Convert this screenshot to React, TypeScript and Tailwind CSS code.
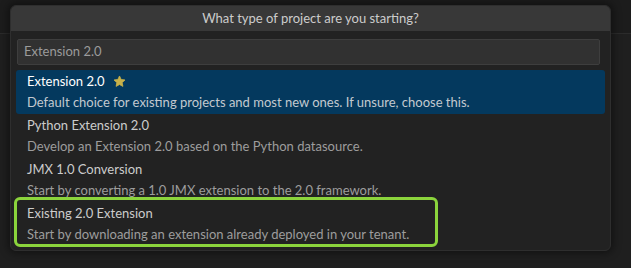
import React from "react";

const items = [
  {
    title: "Extension 2.0",
    description:
      "Default choice for existing projects and most new ones. If unsure, choose this.",
    recommended: true,
  },
  {
    title: "Python Extension 2.0",
    description: "Develop an Extension 2.0 based on the Python datasource.",
  },
  {
    title: "JMX 1.0 Conversion",
    description: "Start by converting a 1.0 JMX extension to the 2.0 framework.",
  },
  {
    title: "Existing 2.0 Extension",
    description: "Start by downloading an extension already deployed in your tenant.",
  },
];

function Star() {
  return (
    <svg width="13" height="13" viewBox="0 0 16 16" className="ml-[8px] shrink-0">
      <path
        d="M8 1.2l2.05 4.3 4.7.6-3.45 3.25.9 4.65L8 11.75 3.8 14l.9-4.65L1.25 6.1l4.7-.6z"
        fill="#c7b14a"
        stroke="#c7b14a"
        strokeWidth="1"
        strokeLinejoin="round"
      />
    </svg>
  );
}

export default function App() {
  return (
    <div
      className="relative w-[631px] h-[268px] overflow-hidden bg-[#1f1f1f]"
      style={{ fontFamily: "Lato, 'Noto Sans', sans-serif" }}
    >
      {/* Editor chrome behind the picker */}
      <div className="h-[34px] border-b border-[#2b2b2b] bg-[#1c1c1c]" />

      {/* Quick pick */}
      <div className="absolute left-[10px] top-[5px] w-[601px] h-[246px] rounded-[6px] border border-[#2e2e2e] bg-[#222222] shadow-[0_0_8px_2px_rgba(0,0,0,0.45)] overflow-hidden">
        <div className="h-[25px] bg-[#383838] flex items-center justify-center text-[13px] text-[#cccccc]">
          What type of project are you starting?
        </div>

        <div className="pl-[5px] pr-[5px] pt-[8px]">
          <div className="ml-[1px] w-[583px] h-[26px] rounded-[2px] border border-[#3e3e3e] bg-[#313131] flex items-center px-[6px] text-[13px] text-[#9b9b9b]">
            Extension 2.0
          </div>

          <div className="mt-[5px] flex flex-col">
            {items.map((item) => (
              <div
                key={item.title}
                className={
                  item.recommended
                    ? "h-[44px] rounded-[3px] bg-[#04395e] pl-[11px] pt-[3px]"
                    : "h-[44px] rounded-[3px] pl-[11px] pt-[3px]"
                }
              >
                <div
                  className={
                    item.recommended
                      ? "flex items-center leading-[17px] text-[13px] text-white"
                      : "flex items-center leading-[17px] text-[13px] text-[#cccccc]"
                  }
                >
                  {item.title}
                  {item.recommended && <Star />}
                </div>
                <div
                  className={
                    item.recommended
                      ? "mt-[4px] leading-[17px] text-[13px] text-[#c3c9d0]"
                      : "mt-[4px] leading-[17px] text-[13px] text-[#9d9d9d]"
                  }
                >
                  {item.description}
                </div>
              </div>
            ))}
          </div>
        </div>
      </div>

      {/* Highlight annotation */}
      <div className="absolute left-[14px] top-[197px] w-[424px] h-[50px] rounded-[6px] border-[3px] border-[#8bd43c]" />
    </div>
  );
}
